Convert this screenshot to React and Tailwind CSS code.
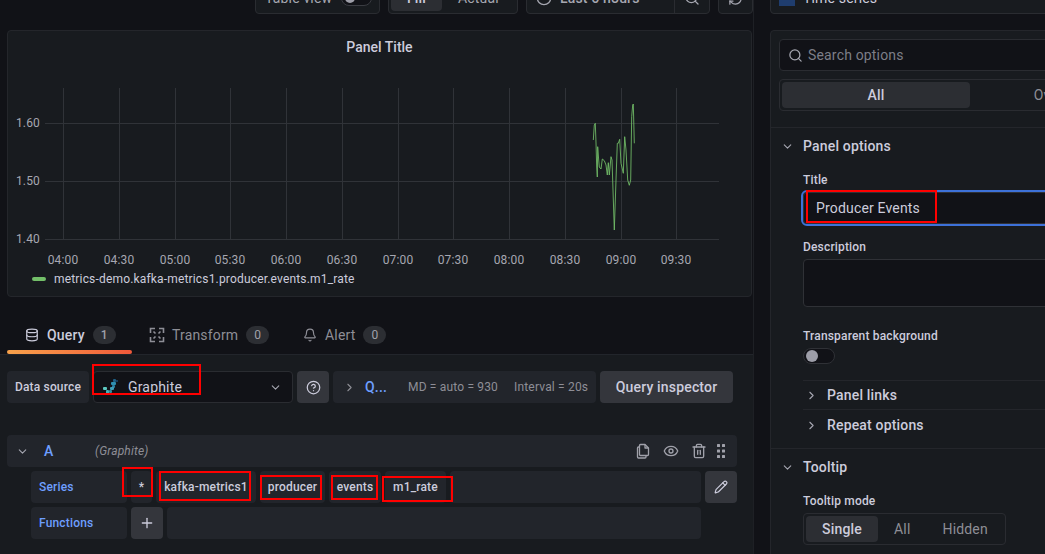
import React from 'react';
import { Bell, ChevronDown, ChevronRight, CircleHelp, Clock, Database, Eye, Pencil, Plus, RefreshCw, Search, Trash2, ZoomOut } from 'lucide-react';

const gridX = [63, 119, 175, 230, 286, 342, 398, 453, 509, 565, 621, 676];
const timeLabels = ['04:00', '04:30', '05:00', '05:30', '06:00', '06:30', '07:00', '07:30', '08:00', '08:30', '09:00', '09:30'];
const valueLabels = [['1.60', 123], ['1.50', 181], ['1.40', 239]];

// traced from the chart, x and y in page pixels
const series = '593.3,140 594.3,125 595.3,123.3 596,143 596.7,167 597.3,177 597.7,146.7 598.7,160 599.3,167 601,169 602.3,159 604.3,160.7 606,165 607.3,175 608.3,162.7 609.3,175 611,156.7 612,160 613,190 614.3,230 616,180 617.3,143.3 618.3,143.3 619.7,139.3 621,163.3 623.3,173.3 624.7,136.7 626,150 627.7,180 629.3,185.3 630.7,180 631.7,116.7 632.7,105 633.3,104 634.3,143.3';

// red annotation boxes drawn on top of the screenshot
const marks = [
  'left-[92px] top-[364px] w-[109px] h-[31px]',
  'left-[122px] top-[467px] w-[31px] h-[30px]',
  'left-[159px] top-[471px] w-[92px] h-[30px]',
  'left-[260px] top-[475px] w-[62px] h-[25px]',
  'left-[331px] top-[475px] w-[47px] h-[25px]',
  'left-[382px] top-[476px] w-[71px] h-[26px]',
  'left-[806px] top-[190px] w-[131px] h-[33px]',
];

const Badge = ({ children }) => (
  <span className="ml-2 flex h-[18px] w-[23px] items-center justify-center rounded-full bg-[#2c2e33] text-xs text-[#a0a1aa]">{children}</span>
);

const Segment = ({ className, children }) => (
  <div className={`flex h-8 items-center justify-center rounded-sm bg-[#22252b] text-xs font-medium text-[#ccccdc] ${className}`}>{children}</div>
);

const Label = ({ children }) => (
  <div className="flex h-8 w-24 items-center rounded-sm bg-[#22252b] pl-2 text-xs font-medium text-[#6e9fff]">{children}</div>
);

const GraphiteLogo = () => (
  <svg width="16" height="16" viewBox="0 0 16 16" className="shrink-0">
    <rect x="10" y="0" width="3" height="3" rx="1" fill="#1d5f86" />
    <rect x="13" y="1" width="2" height="2" rx="1" fill="#1a4a70" />
    <rect x="8" y="3" width="5" height="3" rx="1" fill="#2f8fb0" />
    <rect x="9" y="6" width="3" height="3" rx="1" fill="#2a7ea0" />
    <rect x="7" y="8" width="4" height="3" rx="1" fill="#3f9fb8" />
    <rect x="6" y="11" width="3" height="3" rx="1" fill="#2f8fa0" />
    <rect x="0" y="8" width="4" height="3" rx="1" fill="#5cc8c0" />
    <rect x="3" y="11" width="3" height="4" rx="1" fill="#46b4b8" />
  </svg>
);

const TransformIcon = () => (
  <svg width="16" height="16" viewBox="0 0 16 16" fill="none" stroke="#8e8e96" strokeWidth="1.6">
    <path d="M1.500 6V1.500H6M4.500 4.500L6.500 6.500" />
    <path d="M10 1.500h4.500V6M11.500 4.500L9.500 6.500" />
    <path d="M14.500 10v4.500H10M11.500 11.500L9.500 9.500" />
    <path d="M6 14.500H1.500V10M4.500 11.500L6.500 9.500" />
  </svg>
);

const CopyIcon = () => (
  <svg width="16" height="16" viewBox="0 0 16 16" fill="none" stroke="#a0a1aa" strokeWidth="1.3" strokeLinejoin="round">
    <path d="M5.500 1.500h4.500l3.500 3.500v6.500a1 1 0 0 1-1 1h-7a1 1 0 0 1-1-1v-9a1 1 0 0 1 1-1z" />
    <path d="M10 1.500V5h3.500" />
    <path d="M4.500 4H3.500a1 1 0 0 0-1 1v9a1 1 0 0 0 1 1H10a1 1 0 0 0 1-1v-1" />
  </svg>
);

const Grip = () => (
  <svg width="8" height="16" viewBox="0 0 8 16" fill="#a0a1aa">
    {[1, 6.500, 12].map((y) => (
      <React.Fragment key={y}>
        <rect x="0" y={y} width="3" height="3" rx="0.5" />
        <rect x="5" y={y} width="3" height="3" rx="0.5" />
      </React.Fragment>
    ))}
  </svg>
);

const TopBar = () => (
  <div className="mt-[-18px] flex h-8 text-sm text-[#a6a7b1]">
    <div className="ml-[255px] flex w-[125px] shrink-0 items-center rounded-sm border border-[#2a2c31] bg-[#181b1f] pl-[9px]">
      <span>Table view</span>
      <span className="ml-[9px] flex h-4 w-[31px] items-center rounded-full border border-[#3a3c42] bg-[#111217] pl-[3px]">
        <span className="h-[10px] w-[10px] rounded-full bg-[#9d9ea8]" />
      </span>
    </div>
    <div className="ml-2 flex w-[130px] shrink-0 items-center rounded-sm border border-[#2a2c31] bg-[#181b1f] p-[2px]">
      <span className="flex h-full w-[51px] items-center justify-center rounded-sm bg-[#2c2e33] font-medium text-[#ccccdc]">Fill</span>
      <span className="ml-4">Actual</span>
    </div>
    <div className="ml-2 flex w-[184px] shrink-0 items-center rounded-sm border border-[#2a2c31] bg-[#181b1f]">
      <Clock size={16} className="ml-[9px]" />
      <span className="ml-[8px] w-[114px] font-medium">Last 6 hours</span>
      <span className="flex h-full flex-1 items-center justify-center border-l border-[#2a2c31]">
        <ZoomOut size={16} />
      </span>
    </div>
    <div className="ml-2 flex w-[35px] shrink-0 items-center justify-center rounded-sm border border-[#2a2c31] bg-[#181b1f]">
      <RefreshCw size={15} />
    </div>
  </div>
);

const Chart = () => (
  <svg width="743" height="205" viewBox="8 65 743 205" className="block">
    {gridX.map((x) => (
      <line key={x} x1={x + 0.5} x2={x + 0.5} y1="88" y2="239" stroke="#303338" />
    ))}
    {valueLabels.map(([label, y]) => (
      <line key={label} x1="45" x2="719" y1={y + 0.5} y2={y + 0.5} stroke="#303338" />
    ))}
    <polyline points={series} fill="none" stroke="#73bf69" strokeOpacity="0.85" strokeWidth="1" />
    {valueLabels.map(([label, y]) => (
      <text key={label} x="40" y={y + 4} textAnchor="end" fontSize="12" fill="#a6a7b1">{label}</text>
    ))}
    {timeLabels.map((label, i) => (
      <text key={label} x={gridX[i]} y="264" textAnchor="middle" fontSize="12" fill="#a6a7b1">{label}</text>
    ))}
  </svg>
);

const ChartPanel = () => (
  <section className="mt-4 ml-[7px] h-[267px] w-[745px] rounded-sm border border-[#24262b] bg-[#181b1f]">
    <h2 className="mb-[2px] flex h-[32px] items-center justify-center text-sm font-medium tracking-normal text-[#ccccdc]">Panel Title</h2>
    <Chart />
    <div className="mt-px flex h-4 items-center pl-6 text-xs text-[#ccccdc]">
      <span className="h-1 w-[14px] rounded-sm bg-[#73bf69]" />
      <span className="ml-2">metrics-demo.kafka-metrics1.producer.events.m1_rate</span>
    </div>
  </section>
);

const Tabs = () => (
  <div className="ml-[7px] flex h-[57px] items-end text-sm">
    <div className="w-[125px]">
      <div className="flex h-[33px] items-center pl-[18px] pt-[3px] font-medium text-[#ccccdc]">
        <Database size={14} className="mr-[8px]" />
        Query
        <Badge>1</Badge>
      </div>
      <div className="h-1 rounded-sm bg-gradient-to-r from-[#f7a24b] to-[#f0583a]" />
    </div>
    <div className="w-[171px] pb-1">
      <div className="flex h-[33px] items-center pl-[17px] pt-[3px] text-[#8e8e96]">
        <TransformIcon />
        <span className="ml-[7px]">Transform</span>
        <Badge>0</Badge>
      </div>
    </div>
    <div className="pb-1">
      <div className="flex h-[33px] items-center pt-[3px] text-[#8e8e96]">
        <Bell size={14} className="mr-[8px]" />
        Alert
        <Badge>0</Badge>
      </div>
    </div>
  </div>
);

const DataSourceRow = () => (
  <div className="ml-[7px] flex h-8 gap-1 text-xs">
    <div className="flex w-[82px] items-center justify-center rounded-sm bg-[#22252b] font-medium text-[#ccccdc]">Data source</div>
    <div className="flex w-[200px] items-center rounded-sm border border-[#2a2c31] bg-[#111217] pl-[9px] pr-[10px] text-sm text-[#ccccdc]">
      <GraphiteLogo />
      <span className="ml-[9px] flex-1">Graphite</span>
      <ChevronDown size={13} className="text-[#a6a7b1]" />
    </div>
    <div className="flex w-8 items-center justify-center rounded-sm bg-[#34363c] text-[#ccccdc]">
      <CircleHelp size={15} />
    </div>
    <div className="flex w-[263px] items-center rounded-sm bg-[#22252b] text-[#8e8e96]">
      <ChevronRight size={13} className="ml-[10px]" />
      <span className="ml-[9px] w-[43px] text-sm font-medium text-[#6e9fff]">Q...</span>
      <span>MD = auto = 930</span>
      <span className="ml-4">Interval = 20s</span>
    </div>
    <div className="flex w-[133px] items-center justify-center rounded-sm bg-[#34363c] text-sm font-medium text-[#ccccdc]">Query inspector</div>
  </div>
);

const QueryRow = () => (
  <div className="ml-[7px] mt-8 w-[730px]">
    <div className="flex h-8 items-center rounded-sm bg-[#22252b] pl-[9px] pr-3">
      <ChevronDown size={13} className="text-[#a6a7b1]" />
      <span className="ml-[15px] w-[51px] text-sm font-medium text-[#6e9fff]">A</span>
      <span className="flex-1 text-xs italic text-[#8e8e96]">(Graphite)</span>
      <div className="flex items-center gap-3 text-[#a0a1aa]">
        <CopyIcon />
        <Eye size={16} />
        <Trash2 size={16} />
        <span className="-ml-[2px]"><Grip /></span>
      </div>
    </div>
    <div className="ml-6 mt-1 flex gap-1">
      <Label>Series</Label>
      <Segment className="w-[21px]">*</Segment>
      <Segment className="w-[100px]">kafka-metrics1</Segment>
      <Segment className="w-[65px]">producer</Segment>
      <Segment className="w-[52px]">events</Segment>
      <Segment className="w-[61px]">m1_rate</Segment>
      <Segment className="w-[251px]" />
      <div className="flex h-8 w-8 items-center justify-center rounded-sm bg-[#34363c] text-[#ccccdc]">
        <Pencil size={14} />
      </div>
    </div>
    <div className="ml-6 mt-1 flex gap-1">
      <Label>Functions</Label>
      <div className="flex h-8 w-8 items-center justify-center rounded-sm bg-[#34363c] text-[#ccccdc]">
        <Plus size={16} />
      </div>
      <Segment className="w-[534px]" />
    </div>
  </div>
);

const OptionsPanel = () => (
  <section className="mt-4 h-[540px] w-[400px] rounded-sm border border-[#24262b] bg-[#181b1f] text-[#ccccdc]">
    <div className="px-2 pt-2">
      <div className="flex h-8 items-center rounded-sm border border-[#2a2c31] bg-[#111217] pl-2 text-sm text-[#7d7e87]">
        <Search size={15} className="text-[#a6a7b1]" />
        <span className="ml-[5px]">Search options</span>
      </div>
      <div className="mt-2 flex h-8 rounded-sm border border-[#2a2c31] p-[2px] text-sm">
        <span className="flex w-[188px] items-center justify-center rounded-sm bg-[#2c2e33] font-medium">All</span>
        <span className="flex w-[188px] items-center justify-center text-[#8e8e96]">Overrides</span>
      </div>
    </div>
    <div className="mt-4 border-t border-[#24262b] pl-[10px] pt-[8px]">
      <div className="flex h-[20px] items-center text-sm font-medium">
        <ChevronDown size={13} className="text-[#a6a7b1]" />
        <span className="ml-[9px]">Panel options</span>
      </div>
    </div>
    <div className="pl-8">
      <div className="mt-4 flex h-[15px] items-center text-xs font-medium">Title</div>
      <div className="mt-[5px] flex h-[32px] items-center rounded-sm border border-[#2f3136] bg-[#111217] pl-3 text-sm outline-2 outline-[#3d71d9]">Producer Events</div>
      <div className="mt-[15px] flex h-[15px] items-center text-xs font-medium">Description</div>
      <div className="mt-[5px] h-[48px] rounded-sm border border-[#2f3136] bg-[#111217]" />
      <div className="mt-[21px] flex h-[15px] items-center text-xs font-medium">Transparent background</div>
      <div className="mt-[5px] flex h-4 w-8 items-center rounded-full border border-[#2f3136] bg-[#111217] pl-[2px]">
        <span className="h-3 w-3 rounded-full bg-[#9d9ea8]" />
      </div>
      <div className="mt-4 flex h-[30px] items-center border-y border-[#24262b] text-sm font-medium">
        <ChevronRight size={13} className="ml-[2px] text-[#a6a7b1]" />
        <span className="ml-[9px]">Panel links</span>
      </div>
      <div className="flex h-[30px] items-center text-sm font-medium">
        <ChevronRight size={13} className="ml-[2px] text-[#a6a7b1]" />
        <span className="ml-[9px]">Repeat options</span>
      </div>
    </div>
    <div className="mt-2 border-t border-[#24262b] pl-[10px] pt-[8px]">
      <div className="flex h-[20px] items-center text-sm font-medium">
        <ChevronDown size={13} className="text-[#a6a7b1]" />
        <span className="ml-[9px]">Tooltip</span>
      </div>
    </div>
    <div className="pl-8">
      <div className="mt-[16px] flex h-[15px] items-center text-xs font-medium">Tooltip mode</div>
      <div className="mt-[5px] flex h-8 w-[203px] items-center rounded-sm border border-[#2a2c31] p-[2px] text-sm text-[#8e8e96]">
        <span className="flex h-full w-[72px] items-center justify-center rounded-sm bg-[#2c2e33] font-medium text-[#ccccdc]">Single</span>
        <span className="ml-4">All</span>
        <span className="ml-8">Hidden</span>
      </div>
    </div>
  </section>
);

const App = () => (
  <div className="relative flex h-[554px] w-[1045px] overflow-hidden bg-[#111217] font-['Roboto',sans-serif] tracking-[0.01071em]">
    <div className="w-[754px] shrink-0 border-r border-[#1e2025]">
      <TopBar />
      <ChartPanel />
      <Tabs />
      <div className="h-[200px] border-t border-[#22252b] bg-[#181b1f] pt-4">
        <DataSourceRow />
        <QueryRow />
      </div>
    </div>
    <div className="ml-4 w-[400px] shrink-0">
      <div className="mt-[-18px] flex h-8 items-center gap-2 rounded-sm border border-[#2a2c31] bg-[#181b1f] pl-2 text-sm text-[#ccccdc]">
        <span className="h-4 w-4 bg-[#1f3d6e]" />
        Time series
      </div>
      <OptionsPanel />
    </div>
    {marks.map((mark) => (
      <div key={mark} className={`absolute border-2 border-[#f00] ${mark}`} />
    ))}
  </div>
);

export default App;
